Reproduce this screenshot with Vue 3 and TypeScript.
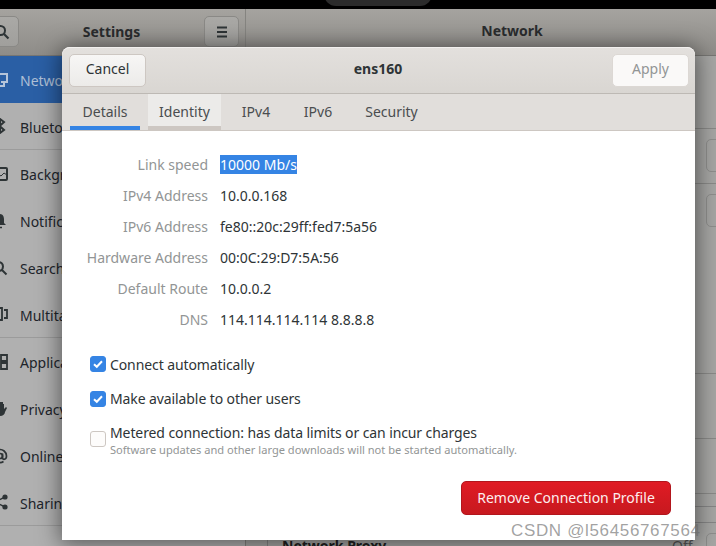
<script setup lang="ts">
const sideRows = [
  { label: 'Network', icon: 'network', active: true },
  { label: 'Bluetooth', icon: 'bt', sep: true },
  { label: 'Background', icon: 'bg' },
  { label: 'Notifications', icon: 'bell' },
  { label: 'Search', icon: 'search' },
  { label: 'Multitasking', icon: 'multi', sep: true },
  { label: 'Applications', icon: 'apps' },
  { label: 'Privacy', icon: 'hand' },
  { label: 'Online Accounts', icon: 'at' },
  { label: 'Sharing', icon: 'share', sep: true },
]
const tabs = ['Details', 'Identity', 'IPv4', 'IPv6', 'Security']
const details = [
  ['IPv4 Address', '10.0.0.168'],
  ['IPv6 Address', 'fe80::20c:29ff:fed7:5a56'],
  ['Hardware Address', '00:0C:29:D7:5A:56'],
  ['Default Route', '10.0.0.2'],
  ['DNS', '114.114.114.114 8.8.8.8'],
]
</script>

<template>
  <div class="screen">
    <div class="topbar"><div class="pill"></div></div>
    <div class="headers">
      <div class="head-left">
        <button class="hbtn search-btn">
          <svg width="16" height="16" viewBox="0 0 16 16"><circle cx="6.5" cy="6.5" r="4.5" fill="none" stroke="#2e3436" stroke-width="2"/><path d="M10 10l4.5 4.5" stroke="#2e3436" stroke-width="2.2"/></svg>
        </button>
        <span class="head-title settings-title">Settings</span>
        <button class="hbtn menu-btn">
          <svg width="12" height="12" viewBox="0 0 12 12"><path d="M1 1.5h10M1 6h10M1 10.5h10" stroke="#2e3436" stroke-width="2"/></svg>
        </button>
      </div>
      <div class="head-right"><span class="head-title">Network</span></div>
    </div>
    <div class="main">
      <aside class="sidebar">
        <div v-for="r in sideRows" :key="r.label" class="side-row" :class="{ active: r.active, sep: r.sep }">
          <svg class="side-icon" width="16" height="16" viewBox="0 0 16 16" fill="none" :stroke="r.active ? '#b4c4da' : '#2e3436'" stroke-width="2">
            <template v-if="r.icon === 'network'"><path d="M1 2h14v8H9M12 10v4H7"/></template>
            <template v-else-if="r.icon === 'bt'"><path d="M3 4l9 8-4 3V1l4 3-9 8"/></template>
            <template v-else-if="r.icon === 'bg'"><rect x="1" y="2" width="14" height="12" rx="1"/><path d="M2 11l4-3 3 2 3-3 3 2" stroke-width="1"/></template>
            <template v-else-if="r.icon === 'bell'"><path d="M8 1c3 0 4 3 4 5v4l2 2H2l2-2V6c0-2 1-5 4-5z" fill="#2e3436" stroke="none"/><path d="M6 14.500h4" stroke-width="1.500"/></template>
            <template v-else-if="r.icon === 'search'"><circle cx="6.500" cy="6.500" r="4.500"/><path d="M10 10l4.500 4.500"/></template>
            <template v-else-if="r.icon === 'multi'"><path d="M1 2h9v12H1zM12 4h3v8h-3" stroke-width="1.800"/></template>
            <template v-else-if="r.icon === 'apps'"><path d="M1 1h6v6H1zM9 1h6v6H9zM1 9h6v6H1zM9 9h6v6H9z" stroke-width="1.800"/></template>
            <template v-else-if="r.icon === 'hand'"><path d="M3 8v4c0 2 2 3 5 3s5-2 5-4l2-4-1-1-2 2V3H11v4V1H9v6V1H7v6V2H5v6z" fill="#2e3436" stroke="none"/></template>
            <template v-else-if="r.icon === 'at'"><circle cx="8" cy="8" r="2.500" stroke-width="1.700"/><path d="M10.500 5.500V10c0 2 4 2 4-2a6.500 6.500 0 1 0-3 5.500" stroke-width="1.700"/></template>
            <template v-else><circle cx="3" cy="8" r="2.600" fill="#2e3436" stroke="none"/><circle cx="13" cy="3" r="2.600" fill="#2e3436" stroke="none"/><circle cx="13" cy="13" r="2.600" fill="#2e3436" stroke="none"/><path d="M13 3L3 8l10 5" stroke-width="1.500"/></template>
          </svg>
          <span class="side-label">{{ r.label }}</span>
        </div>
      </aside>
      <section class="panel">
        <div class="card">
          <div class="card-row r1"></div>
          <div class="card-row r2"><i class="gear"></i></div>
          <div class="card-row r3"><i class="gear"></i></div>
          <div class="card-row r4"></div>
          <div class="card-row r5"></div>
          <div class="card-row r6"></div>
        </div>
        <div class="proxy">
          <b>Network Proxy</b>
          <span>Off</span>
          <i class="gear"></i>
        </div>
      </section>
    </div>

    <div class="dialog">
      <header class="dlg-title">
        <button class="btn cancel">Cancel</button>
        <strong>ens160</strong>
        <button class="btn apply">Apply</button>
      </header>
      <nav class="tabs">
        <span v-for="(t, i) in tabs" :key="t" class="tab" :class="{ on: i === 0, hover: i === 1 }">{{ t }}</span>
      </nav>
      <div class="body">
        <div class="grid">
          <span class="k">Link speed</span>
          <span class="v"><span class="sel">10000 Mb/s</span></span>
          <template v-for="d in details" :key="d[0]">
            <span class="k">{{ d[0] }}</span>
            <span class="v">{{ d[1] }}</span>
          </template>
        </div>
        <div class="checks">
          <label class="check">
            <span class="box on"><svg width="12" height="12" viewBox="0 0 12 12"><path d="M2 6.200l2.800 2.600L10 3.200" fill="none" stroke="#fff" stroke-width="2"/></svg></span>
            <span>Connect automatically</span>
          </label>
          <label class="check">
            <span class="box on"><svg width="12" height="12" viewBox="0 0 12 12"><path d="M2 6.200l2.800 2.600L10 3.200" fill="none" stroke="#fff" stroke-width="2"/></svg></span>
            <span>Make available to other users</span>
          </label>
          <label class="check metered">
            <span class="box"></span>
            <span class="mtext">
              <span>Metered connection: has data limits or can incur charges</span>
              <small>Software updates and other large downloads will not be started automatically.</small>
            </span>
          </label>
        </div>
        <div class="actions"><button class="remove">Remove Connection Profile</button></div>
      </div>
    </div>
    <div class="mark">CSDN @l56456767564</div>
  </div>
</template>

<style>
html, body { margin: 0; background: #000; }
</style>

<style scoped>
.screen {
  position: relative;
  width: 716px;
  height: 546px;
  overflow: hidden;
  display: flex;
  flex-direction: column;
  font-family: "Noto Sans", "Open Sans", sans-serif;
  font-size: 14px;
  color: #2e3436;
  background: #a6a6a4;
}
.topbar { height: 9px; background: #000; flex: none; position: relative; }
.pill { position: absolute; left: 324px; top: -10px; width: 108px; height: 16px; background: #2b2b2b; border-radius: 0 0 12px 12px; }
.headers {
  height: 47px;
  flex: none;
  display: flex;
  background: linear-gradient(#a5a39f, #8e8c88);
  border-bottom: 1px solid #777673;
  box-sizing: border-box;
}
.head-left {
  width: 246px;
  flex: none;
  box-sizing: border-box;
  border-right: 1px solid #858480;
  display: flex;
  align-items: center;
  justify-content: center;
  position: relative;
}
.head-right { width: 532px; flex: none; display: flex; align-items: center; justify-content: center; padding-bottom: 3px; box-sizing: border-box; }
.head-title { font-weight: 700; font-size: 14px; color: #2a2c2e; }
.settings-title { position: relative; left: -11px; top: -1px; }
.hbtn {
  position: absolute;
  top: 7px;
  height: 31px;
  padding: 0;
  border: 1px solid #8a8986;
  border-radius: 5px;
  background: linear-gradient(#aaa9a6, #a09f9c);
  display: flex;
  align-items: center;
  justify-content: center;
}
.search-btn { left: -16px; width: 35px; }
.menu-btn { left: 204px; width: 35px; }
.main { flex: 1; display: flex; min-height: 0; }
.sidebar { width: 246px; flex: none; box-sizing: border-box; background: #b0b0b0; border-right: 1px solid #858480; overflow: hidden; }
.side-row {
  height: 47px;
  display: flex;
  align-items: center;
  gap: 12px;
  color: #20242a;
  font-size: 14px;
  white-space: nowrap;
  box-sizing: border-box;
}
.side-label { padding-top: 2px; }
.side-row.sep { border-bottom: 1px solid #9b9b9b; }
.side-row.active { background: #2a5fa5; color: #aebfd6; }
.side-icon { margin-left: -8px; flex: none; }
.panel { flex: 1; padding-left: 21px; min-width: 0; overflow: hidden; display: flex; flex-direction: column; }
.card { width: 470px; flex: none; border: 1px solid #868686; border-top: none; border-radius: 0 0 8px 8px; }
.card-row { border-bottom: 1px solid #8a8a88; position: relative; box-sizing: border-box; }
.card-row:last-child { border-bottom: none; }
.r1 { height: 73px; }
.r2 { height: 55px; }
.r3 { height: 190px; }
.r4 { height: 65px; }
.r5 { height: 55px; }
.r6 { height: 12px; }
.gear { position: absolute; left: 438px; top: 10px; width: 34px; height: 33px; border: 1px solid #8e8e8c; border-radius: 5px; box-sizing: border-box; display: block; }
.proxy { margin-top: 15px; width: 470px; flex: none; position: relative; border: 1px solid #868686; border-radius: 8px; height: 60px; box-sizing: border-box; padding: 13px 0 0 14px; line-height: 20px; color: #202020; }
.proxy span { position: absolute; left: 404px; top: 13px; color: #555; }
.proxy .gear { top: 10px; }

.dialog {
  position: absolute;
  left: 62px;
  top: 47px;
  width: 633px;
  height: 493px;
  display: flex;
  flex-direction: column;
  background: #fff;
  border-radius: 8px 8px 0 0;
  box-shadow: 0 2px 22px 2px rgba(0, 0, 0, 0.5);
}
.dlg-title {
  height: 47px;
  flex: none;
  box-sizing: border-box;
  display: flex;
  align-items: center;
  justify-content: space-between;
  padding: 0 6px 0 7px;
  background: linear-gradient(#e3e0dd, #d9d6d2);
  border-top: 1px solid #f2f0ee;
  border-bottom: 1px solid #bdb9b4;
  border-radius: 8px 8px 0 0;
}
.dlg-title strong { font-size: 14px; font-weight: 700; color: #2e3436; position: relative; top: -2px; left: -1px; }
.btn {
  width: 77px;
  height: 33px;
  padding: 0 0 4px;
  font: inherit;
  border-radius: 5px;
  border: 1px solid #cdc7c2;
}
.cancel { background: linear-gradient(#f7f6f5, #ecebe9); color: #2e3436; }
.apply { background: #faf9f8; color: #929595; border-color: #dcd8d4; }
.tabs {
  height: 37px;
  flex: none;
  box-sizing: border-box;
  display: grid;
  grid-template-columns: 70px 73px 54px 54px 77px;
  column-gap: 8px;
  padding-left: 8px;
  background: #e1dedb;
  border-bottom: 1px solid #cdc7c2;
}
.tab {
  padding-top: 3px;
  height: 36px;
  display: flex;
  align-items: center;
  justify-content: center;
  box-sizing: border-box;
  border-bottom: 4px solid transparent;
  color: #4a4d4f;
}
.tab.on { border-bottom-color: #3584e4; }
.tab.hover { background: #ecebe9; border-bottom-color: #cdc7c2; }
.body { flex: 1; display: flex; flex-direction: column; padding: 18px 24px 25px 24px; min-height: 0; }
.grid {
  display: grid;
  grid-template-columns: 122px 1fr;
  column-gap: 12px;
  grid-auto-rows: 31px;
  align-items: center;
}
.k { text-align: right; color: #929595; white-space: nowrap; }
.v { color: #2e3436; }
.sel { background: #3584e4; color: #fff; }
.checks { display: flex; flex-direction: column; margin: 12px 0 0 4px; letter-spacing: -0.1px; }
.check { display: flex; align-items: center; gap: 4px; height: 34.5px; }
.box {
  width: 16px;
  height: 16px;
  box-sizing: border-box;
  border: 1px solid #cdc7c2;
  border-radius: 3px;
  background: #fdfcfb;
  display: flex;
  align-items: center;
  justify-content: center;
  flex: none;
}
.box.on { background: #3584e4; border-color: #3584e4; }
.metered { align-items: flex-start; height: auto; }
.metered .box { margin-top: 15px; }
.mtext { display: flex; flex-direction: column; line-height: 20px; padding-top: 7px; }
.mtext small { font-size: 11.1px; line-height: 14px; color: #929595; letter-spacing: 0; }
.actions { margin-top: auto; display: flex; justify-content: flex-end; }
.remove {
  width: 210px;
  height: 34px;
  padding: 0 0 2px;
  font: inherit;
  color: #fdeeee;
  border: 1px solid #b2161d;
  border-radius: 5px;
  background: linear-gradient(#e01b24, #c7191f);
}
.mark {
  position: absolute;
  left: 511px;
  top: 521px;
  font-family: "Liberation Sans", sans-serif;
  font-size: 17px;
  letter-spacing: 0.65px;
  color: rgba(100, 100, 100, 0.6);
  white-space: nowrap;
}
</style>
